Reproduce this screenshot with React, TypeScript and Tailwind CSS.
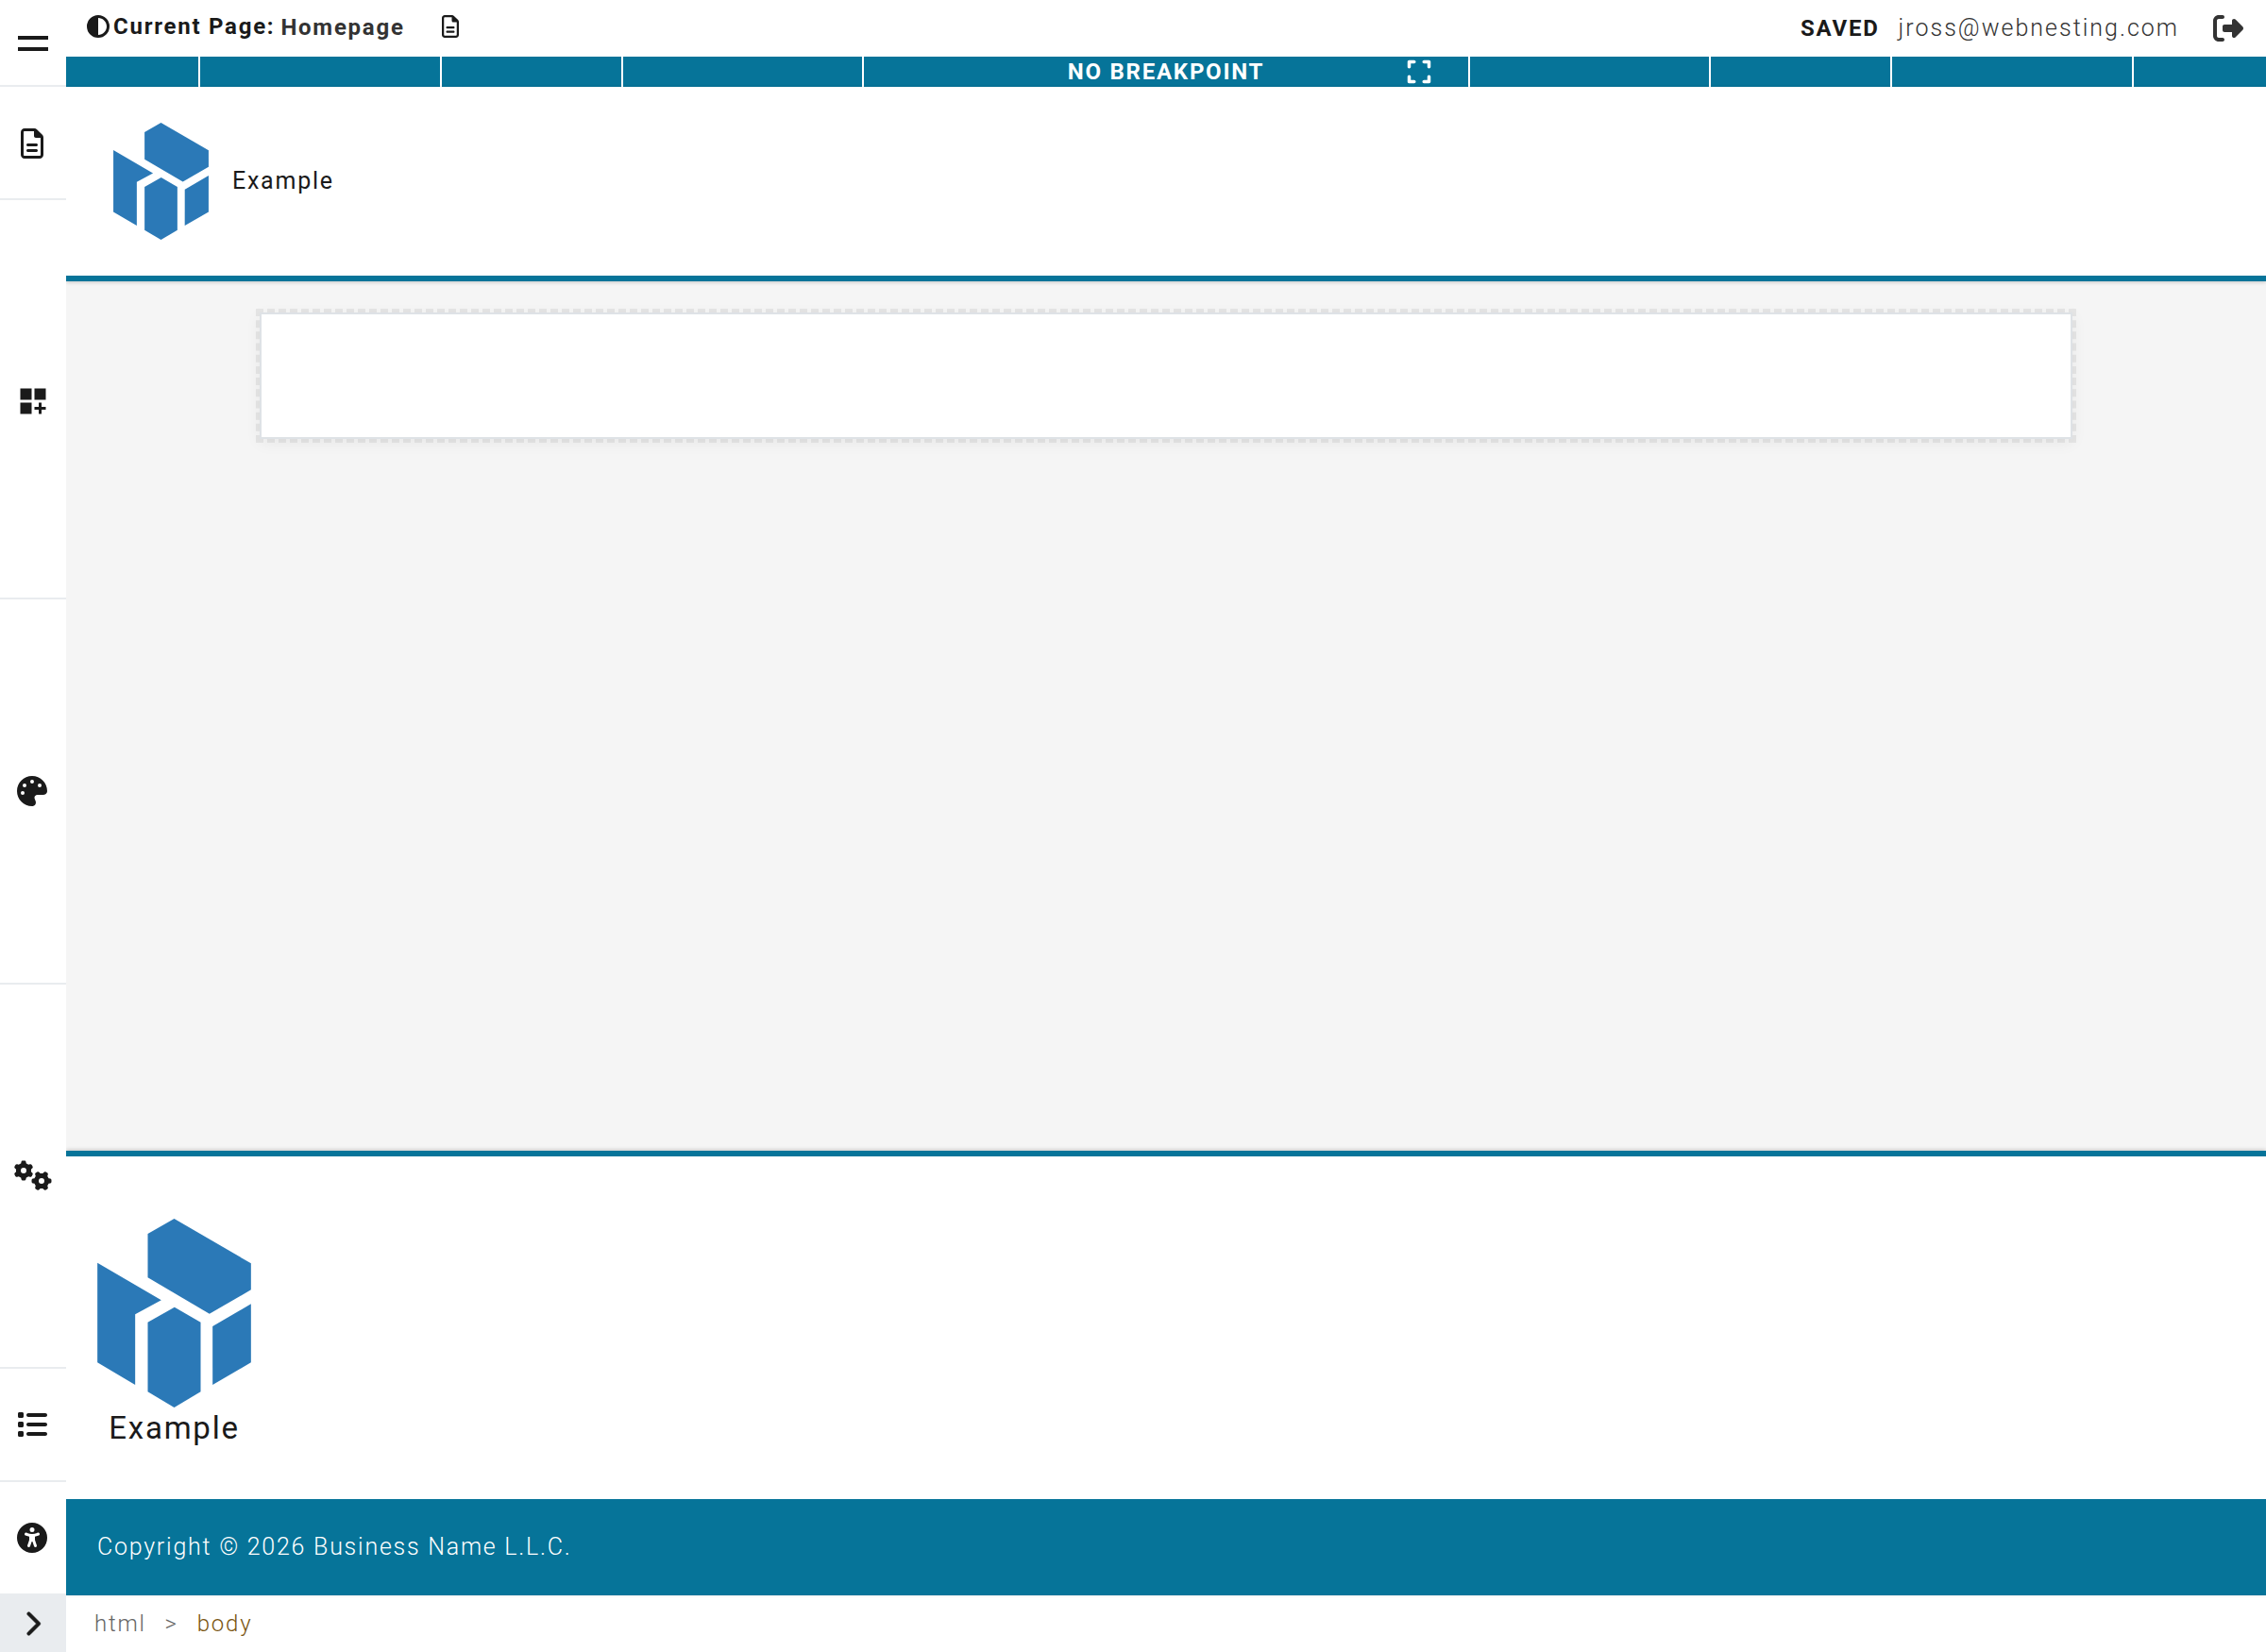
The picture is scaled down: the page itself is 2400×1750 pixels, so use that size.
import type { ReactNode } from 'react'
import {
  FaChevronRight,
  FaCircleHalfStroke,
  FaExpand,
  FaGears,
  FaList,
  FaPalette,
  FaRegFileLines,
  FaRightFromBracket,
  FaUniversalAccess,
} from 'react-icons/fa6'
import { MdDashboardCustomize } from 'react-icons/md'

function Logo({ className }: { className: string }) {
  return (
    <svg viewBox="0 0 488 600" className={className} fill="#2b79b7" aria-hidden="true">
      <polygon points="244,0 488,142 488,226 356,302 160,187 160,48" />
      <polygon points="0,140 203,259 120,304 120,528 0,457" />
      <polygon points="160,329 245,281 328,329 328,550 244,600 160,550" />
      <polygon points="366,342 488,271 488,457 366,528" />
    </svg>
  )
}

function SidebarButton({ label, className, children }: { label: string; className: string; children: ReactNode }) {
  return (
    <button
      type="button"
      aria-label={label}
      className={`flex w-full items-center justify-center border-b-2 border-[#e9ecef] ${className}`}
    >
      {children}
    </button>
  )
}

function Sidebar() {
  return (
    <nav aria-label="Editor tools" className="z-20 flex w-[70px] shrink-0 flex-col bg-white">
      <SidebarButton label="Menu" className="h-[92px] pt-0.5">
        <span className="flex flex-col gap-2">
          <span className="h-1 w-8 bg-[#1a1a1a]" />
          <span className="h-1 w-8 bg-[#1a1a1a]" />
        </span>
      </SidebarButton>
      <SidebarButton label="Pages" className="h-[120px] pt-0.5 pr-0.5">
        <FaRegFileLines size={32} />
      </SidebarButton>
      <SidebarButton label="Add component" className="flex-auto pt-2 pb-1">
        <MdDashboardCustomize size={36} />
      </SidebarButton>
      <SidebarButton label="Styles" className="flex-auto pr-0.5">
        <FaPalette size={32} />
      </SidebarButton>
      <SidebarButton label="Settings" className="flex-auto">
        <FaGears className="h-8 w-10" />
      </SidebarButton>
      <SidebarButton label="Layers" className="h-[120px] pr-0.5">
        <FaList size={32} />
      </SidebarButton>
      <SidebarButton label="Accessibility" className="h-[120px] pr-0.5">
        <FaUniversalAccess size={32} />
      </SidebarButton>
      <button type="button" aria-label="Expand sidebar" className="flex h-[60px] items-center justify-center bg-[#e9ecef] pr-0.5">
        <FaChevronRight size={28} stroke="currentColor" strokeWidth={12} />
      </button>
    </nav>
  )
}

function TopBar() {
  return (
    <div className="flex h-[60px] items-center justify-between bg-white pr-6 pl-[22px]">
      <div className="flex items-center pb-1 text-2xl font-bold">
        <button type="button" aria-label="Toggle contrast">
          <FaCircleHalfStroke size={24} />
        </button>
        <span className="pl-1">Current Page:</span>
        <span className="pt-0.5 pl-1.5 text-[#333]">Homepage</span>
        <button type="button" aria-label="Page details" className="pl-9">
          <FaRegFileLines size={24} />
        </button>
      </div>
      <div className="flex items-center">
        <span className="text-2xl font-bold">SAVED</span>
        <a href="#account" className="pl-5 tracking-[0.08em] text-[#333]">jross@webnesting.com</a>
        <button type="button" aria-label="Log out" className="pl-9 text-[#333]">
          <FaRightFromBracket size={32} />
        </button>
      </div>
    </div>
  )
}

function BreakpointBar() {
  return (
    <div className="flex h-8 bg-[#067499] text-white">
      <button type="button" aria-label="Extra large" className="flex-1" />
      <button type="button" aria-label="Large" className="w-64 border-l-2 border-white" />
      <button type="button" aria-label="Medium" className="w-48 border-l-2 border-white" />
      <button type="button" aria-label="Small" className="w-[255px] border-l-2 border-white" />
      <div className="grid w-[644px] grid-cols-[1fr_auto_1fr] items-center border-x-2 border-white">
        <span className="col-start-2 text-2xl leading-7 font-bold">NO BREAKPOINT</span>
        <button type="button" aria-label="Fullscreen" className="mr-[38px] justify-self-end">
          <FaExpand size={28} />
        </button>
      </div>
      <button type="button" aria-label="Small" className="w-[255px] border-r-2 border-white" />
      <button type="button" aria-label="Medium" className="w-48 border-r-2 border-white" />
      <button type="button" aria-label="Large" className="w-64 border-r-2 border-white" />
      <button type="button" aria-label="Extra large" className="flex-1" />
    </div>
  )
}

export default function App() {
  return (
    <div className="flex min-h-screen bg-white font-['Roboto',sans-serif] text-[25px] leading-8 font-light tracking-[0.07em] text-[#1a1a1a]">
      <Sidebar />
      <div className="flex min-w-0 flex-1 flex-col">
        <TopBar />
        <BreakpointBar />

        <header className="z-10 flex items-center gap-[25px] border-b-6 border-[#067499] bg-white px-[50px] py-[38px] shadow-[0_1px_4px_rgba(0,0,0,0.2)]">
          <Logo className="h-[124px] w-[101px]" />
          <span className="font-normal">Example</span>
        </header>

        <main className="flex-1 bg-[#f5f5f5] px-8 py-[33px]">
          <section
            aria-label="Empty section"
            className="mx-auto h-[134px] max-w-[1920px] border-2 border-[#dee2e6] bg-white shadow-[0_4px_16px_rgba(0,0,0,0.06)] outline-4 outline-black/6 outline-dashed"
          />
        </main>

        <footer className="z-10 shadow-[0_-1px_4px_rgba(0,0,0,0.2)]">
          <div className="flex border-t-6 border-[#067499] bg-white px-[33px] pt-[66px] pb-[53px]">
            <div className="flex flex-col items-center">
              <Logo className="h-[200px] w-[163px]" />
              <span className="text-[33px] leading-11 font-normal">Example</span>
            </div>
          </div>
          <div className="flex h-[102px] items-center bg-[#067499] px-[33px] text-white">
            Copyright © 2026 Business Name L.L.C.
          </div>
        </footer>

        <nav aria-label="Element path" className="flex h-[60px] items-center gap-5 bg-white px-[30px] text-2xl text-[#666]">
          <a href="#html">html</a>
          <span>&gt;</span>
          <a href="#body" className="text-[#7a5510]">body</a>
        </nav>
      </div>
    </div>
  )
}
